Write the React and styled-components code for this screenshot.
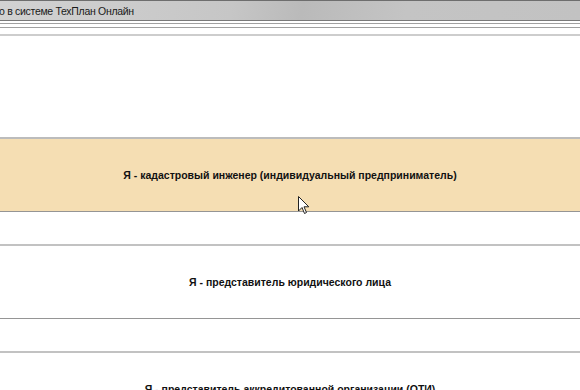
import React from 'react';
import styled, { createGlobalStyle } from 'styled-components';

const Global = createGlobalStyle`
  html, body {
    margin: 0;
    padding: 0;
    background: #fff;
    overflow: hidden;
  }
  body {
    font-family: Tahoma, "DejaVu Sans", "Liberation Sans", sans-serif;
  }
`;

const Page = styled.div`
  position: relative;
  width: 580px;
  height: 390px;
  overflow: hidden;
  background: #fff;
`;

const TitleBar = styled.div`
  height: 19px;
  border-top: 1px solid #6e6e6e;
  border-bottom: 1px solid #7a7a7a;
  background: linear-gradient(100deg, #d2d2d2 0%, #c6c6c6 40%, #bababa 52%, #c4c4c4 70%, #c2c2c2 100%);
  display: flex;
  align-items: center;
  box-sizing: content-box;
`;

const Title = styled.span`
  font-family: "Liberation Sans", Arial, sans-serif;
  font-size: 10.5px;
  letter-spacing: -0.3px;
  color: #1a1a1a;
  margin-left: -1px;
  white-space: nowrap;
`;

const Rule = styled.div`
  height: ${p => p.$h || 1}px;
  background: ${p => p.$c || '#9a9a9a'};
  margin-top: ${p => p.$gap || 0}px;
`;

const Options = styled.div`
  display: flex;
  flex-direction: column;
  gap: 32px;
  padding-top: 101px;
`;

const Option = styled.div`
  height: 72px;
  border-top: 2px solid ${p => (p.$active ? '#bcbcbc' : '#c2c2c2')};
  border-bottom: 1px solid #959595;
  background: ${p => (p.$active ? '#f5deb3' : '#fff')};
  display: flex;
  align-items: center;
  justify-content: center;
  flex-shrink: 0;
`;

const Label = styled.span`
  font-family: "Liberation Sans", Arial, sans-serif;
  font-weight: bold;
  font-size: 10.5px;
  color: #111;
  white-space: nowrap;
`;

const Cursor = styled.svg`
  position: absolute;
  left: 298px;
  top: 196px;
`;

export default function App() {
  return (
    <Page>
      <Global />
      <TitleBar>
        <Title>о в системе ТехПлан Онлайн</Title>
      </TitleBar>
      <Rule $gap={2} $c="#a0a0a0" />
      <Rule $gap={3} $c="#a0a0a0" />
      <Rule $gap={6} $h={2} $c="#cdcdcd" />
      <Options>
        <Option $active>
          <Label>Я - кадастровый инженер (индивидуальный предприниматель)</Label>
        </Option>
        <Option>
          <Label>Я - представитель юридического лица</Label>
        </Option>
        <Option>
          <Label>Я - представитель аккредитованной организации (ОТИ)</Label>
        </Option>
      </Options>
      <Cursor width="12" height="19" viewBox="0 0 12 19">
        <path d="M0.5 0.5 L0.5 15 L4 11.5 L6.5 17.5 L8.5 16.5 L6 10.8 L10.8 10.8 Z" fill="#fff" stroke="#222" strokeWidth="1" strokeLinejoin="round" />
      </Cursor>
    </Page>
  );
}
